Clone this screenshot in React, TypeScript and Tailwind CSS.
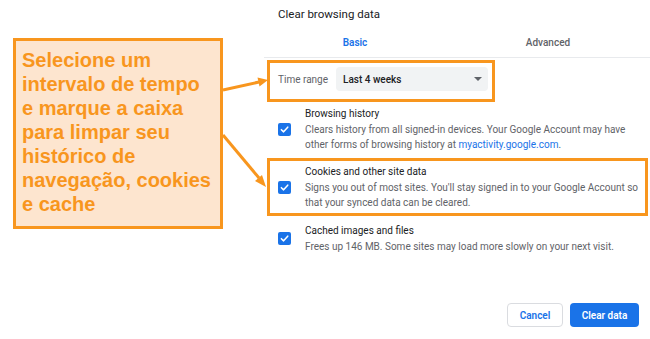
import React from "react";

function Check() {
  return (
    <div className="w-[13px] h-[13px] rounded-[2px] bg-[#1a73e8] flex items-center justify-center shrink-0">
      <svg width="9" height="9" viewBox="0 0 10 10">
        <path d="M1.5 5.2 L4 7.6 L8.6 2.4" fill="none" stroke="white" strokeWidth="1.7" strokeLinecap="round" strokeLinejoin="round" />
      </svg>
    </div>
  );
}

function Row({ title, lines }: { title: string; lines: React.ReactNode[] }) {
  return (
    <div className="flex items-center">
      <Check />
      <div className="ml-[14px] leading-[15.5px] text-[10px] whitespace-nowrap">
        <div className="text-[#202124]">{title}</div>
        {lines.map((l, i) => (
          <div key={i} className="text-[#5f6368]">
            {l}
          </div>
        ))}
      </div>
    </div>
  );
}

export default function App() {
  return (
    <div className="relative w-[650px] h-[339px] bg-white overflow-hidden flex font-['Roboto','Liberation_Sans',sans-serif]">
      {/* Callout */}
      <div className="w-[264px] shrink-0 pl-[13px] pt-[38px]">
        <div className="w-[210px] h-[191px] border-[3px] border-[#f8961e] bg-[#fde5cf] pl-[6px] pt-[7px] font-['Liberation_Sans',Arial,sans-serif] font-bold text-[20px] leading-[24px] text-[#f8961e]">
          Selecione um
          <br />
          intervalo de tempo
          <br />
          e marque a caixa
          <br />
          para limpar seu
          <br />
          histórico de
          <br />
          navegação, cookies
          <br />
          e cache
        </div>
      </div>

      {/* Dialog */}
      <div className="flex-1 flex flex-col">
        <div className="shrink-0 h-[28px] leading-[28px] pl-[14px] text-[11.5px] text-[#202124]">Clear browsing data</div>
        <div className="shrink-0 h-[30px] flex border-b border-[#e8eaed] text-[10px] font-semibold">
          <div className="w-[182px] flex items-center justify-center text-[#1a73e8]">Basic</div>
          <div className="w-[204px] flex items-center justify-center text-[#5f6368] font-medium">Advanced</div>
        </div>

        <div className="shrink-0 mt-[2px] ml-[3px] w-[228px] h-[42px] border-[3px] border-[#f8961e] flex items-start pl-[8px] pt-[4px]">
          <div className="h-[24px] flex items-center text-[10px] text-[#5f6368] w-[58px]">Time range</div>
          <div className="h-[24px] w-[152px] rounded-[4px] bg-[#f1f3f4] flex items-center justify-between pl-[7px] pr-[6px]">
            <span className="text-[10px] font-medium text-[#202124]">Last 4 weeks</span>
            <svg width="8" height="4" viewBox="0 0 8 4">
              <path d="M0 0 L8 0 L4 4 Z" fill="#5f6368" />
            </svg>
          </div>
        </div>

        <div className="shrink-0 mt-[4px] pl-[14px]">
          <Row
            title="Browsing history"
            lines={[
              "Clears history from all signed-in devices. Your Google Account may have",
              <>
                other forms of browsing history at <span className="text-[#1a73e8]">myactivity.google.com</span>.
              </>,
            ]}
          />
        </div>

        <div className="shrink-0 mt-[5px] ml-[3px] w-[381px] border-[3px] border-[#f8961e] pl-[8px] pt-[3.5px] pb-[2.5px]">
          <Row
            title="Cookies and other site data"
            lines={[
              "Signs you out of most sites. You'll stay signed in to your Google Account so",
              "that your synced data can be cleared.",
            ]}
          />
        </div>

        <div className="shrink-0 mt-[7px] pl-[14px]">
          <Row title="Cached images and files" lines={["Frees up 146 MB. Some sites may load more slowly on your next visit."]} />
        </div>

        <div className="shrink-0 mt-[49px] flex justify-end gap-[7px] pr-[11px]">
          <button className="h-[24px] w-[56px] rounded-[4px] border border-[#dadce0] bg-white text-[10px] font-semibold text-[#1a73e8]">
            Cancel
          </button>
          <button className="h-[24px] w-[69px] rounded-[4px] bg-[#1a73e8] text-[10px] font-semibold text-white">
            Clear data
          </button>
        </div>
      </div>

      {/* Arrows */}
      <svg className="absolute inset-0 pointer-events-none" width="650" height="339" viewBox="0 0 650 339">
        <line x1="223" y1="90" x2="259" y2="82" stroke="#f8961e" strokeWidth="3" />
        <path d="M268 80 L257.5 77.5 L259.5 86.5 Z" fill="#f8961e" />
        <line x1="223" y1="135" x2="259" y2="178" stroke="#f8961e" strokeWidth="3" />
        <path d="M266 187 L255 181 L262 175 Z" fill="#f8961e" />
      </svg>
    </div>
  );
}
